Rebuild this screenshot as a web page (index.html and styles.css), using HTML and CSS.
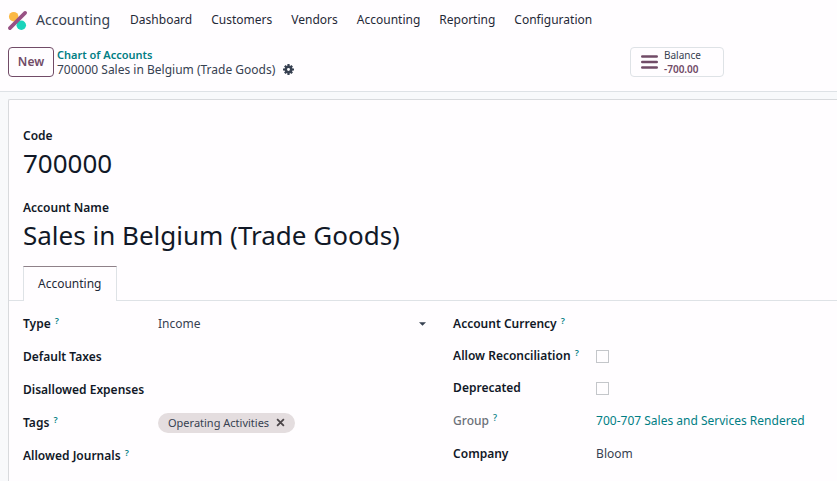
FILE: index.html
```
<!DOCTYPE html>
<html lang="en">
<head>
    <meta charset="UTF-8">
    <meta name="viewport" content="width=device-width, initial-scale=1.0">
    <title>700000 Sales in Belgium (Trade Goods)</title>
    <link rel="stylesheet" href="styles.css">
</head>
<body>
    <header class="navbar">
        <a href="#" class="brand">
            <svg class="logo" viewBox="0 0 20 20" aria-hidden="true">
                <circle cx="6" cy="6" r="5" fill="#fbb945"/>
                <circle cx="14" cy="15" r="5" fill="#1ad3bb"/>
                <path d="M2 18 18 2" stroke="#985184" stroke-width="3.8" stroke-linecap="round"/>
            </svg>
            <span>Accounting</span>
        </a>
        <nav class="menu">
            <a href="#">Dashboard</a>
            <a href="#">Customers</a>
            <a href="#">Vendors</a>
            <a href="#">Accounting</a>
            <a href="#">Reporting</a>
            <a href="#">Configuration</a>
        </nav>
    </header>

    <div class="control-panel">
        <div class="breadcrumbs">
            <button class="btn-new">New</button>
            <div class="crumbs">
                <a href="#" class="crumb-link">Chart of Accounts</a>
                <div class="crumb-current">
                    <span>700000 Sales in Belgium (Trade Goods)</span>
                    <button class="btn-gear" aria-label="Actions">
                        <svg viewBox="0 0 12 12" aria-hidden="true">
                            <path d="M6 0v12M0 6h12M2 2l8 8M10 2l-8 8" stroke="#374151" stroke-width="2.4"/>
                            <circle cx="6" cy="6" r="3" fill="#fff" stroke="#374151" stroke-width="2.8"/>
                        </svg>
                    </button>
                </div>
            </div>
        </div>
        <div class="stats">
            <button class="stat">
                <svg class="bars" viewBox="0 0 17 14" aria-hidden="true">
                    <path d="M1.3 1.5h14.4M1.3 7h14.4M1.3 12.5h14.4" stroke="#714b67" stroke-width="2.6" stroke-linecap="round"/>
                </svg>
                <span class="stat-text">
                    <span>Balance</span>
                    <span class="stat-value">-700.00</span>
                </span>
            </button>
        </div>
    </div>

    <main class="content">
        <form class="sheet">
            <div class="title-field">
                <label for="code">Code</label>
                <input id="code" type="text" value="700000">
            </div>
            <div class="title-field">
                <label for="name">Account Name</label>
                <input id="name" type="text" value="Sales in Belgium (Trade Goods)">
            </div>

            <div class="tabs">
                <button type="button" class="tab">Accounting</button>
            </div>

            <div class="groups">
                <div class="group">
                    <div class="field">
                        <label for="type">Type <sup>?</sup></label>
                        <div class="select">
                            <select id="type">
                                <option>Income</option>
                            </select>
                            <svg class="caret" viewBox="0 0 8 4" aria-hidden="true"><path d="M0 0h8L4 4z" fill="#374151"/></svg>
                        </div>
                    </div>
                    <div class="field">
                        <label for="taxes">Default Taxes</label>
                        <input id="taxes" type="text">
                    </div>
                    <div class="field">
                        <label for="disallowed">Disallowed Expenses</label>
                        <input id="disallowed" type="text">
                    </div>
                    <div class="field">
                        <span class="label">Tags <sup>?</sup></span>
                        <div>
                            <span class="tag">
                                Operating Activities
                                <button type="button" aria-label="Remove tag">
                                    <svg viewBox="0 0 8 8" aria-hidden="true"><path d="M1 1l6 6M7 1L1 7" stroke="#4b4548" stroke-width="1.6"/></svg>
                                </button>
                            </span>
                        </div>
                    </div>
                    <div class="field">
                        <label for="journals">Allowed Journals <sup>?</sup></label>
                        <input id="journals" type="text">
                    </div>
                </div>

                <div class="group">
                    <div class="field">
                        <label for="currency">Account Currency <sup>?</sup></label>
                        <input id="currency" type="text">
                    </div>
                    <div class="field check">
                        <label for="reconcile">Allow Reconciliation <sup>?</sup></label>
                        <input id="reconcile" type="checkbox">
                    </div>
                    <div class="field check">
                        <label for="deprecated">Deprecated</label>
                        <input id="deprecated" type="checkbox">
                    </div>
                    <div class="field">
                        <span class="label readonly">Group <sup>?</sup></span>
                        <a href="#" class="record-link">700-707 Sales and Services Rendered</a>
                    </div>
                    <div class="field">
                        <label for="company">Company</label>
                        <input id="company" type="text" value="Bloom">
                    </div>
                </div>
            </div>
        </form>
    </main>
</body>
</html>
```

FILE: styles.css
```
* {
    box-sizing: border-box;
}
body {
    margin: 0;
    min-height: 100vh;
    display: flex;
    flex-direction: column;
    background-color: #fffdff;
    color: #374151;
    font-family: "Noto Sans", "Open Sans", sans-serif;
    font-size: 12px;
    line-height: 16px;
}
a {
    color: inherit;
    text-decoration: none;
}
button,
input,
select {
    font: inherit;
    color: inherit;
    border: none;
    background: none;
    padding: 0;
    margin: 0;
}
button {
    cursor: pointer;
}
svg {
    display: block;
    fill: none;
}

/* top bar */
.navbar {
    height: 40px;
    padding: 0 8px;
    display: flex;
    align-items: center;
    gap: 20px;
}
.brand {
    display: flex;
    align-items: center;
    gap: 9px;
    font-size: 14px;
}
.logo {
    width: 19px;
    height: 19px;
}
.menu {
    display: flex;
    gap: 19px;
    color: #1f2937;
}

/* breadcrumbs and stat button */
.control-panel {
    min-height: 52px;
    padding: 6px 8px 14px;
    display: grid;
    grid-template-columns: 622fr 199fr;
    border-bottom: 1px solid #dee2e6;
}
.breadcrumbs {
    display: flex;
    align-items: center;
    gap: 3px;
}
.btn-new {
    height: 30px;
    width: 46px;
    border: 1px solid #714b67;
    border-radius: 4px;
    color: #714b67;
    font-weight: 600;
}
.crumbs {
    display: flex;
    flex-direction: column;
    line-height: 15px;
}
.crumb-link {
    color: #017e84;
    font-size: 11px;
    font-weight: 600;
}
.crumb-current {
    display: flex;
    align-items: center;
    gap: 8px;
}
.btn-gear {
    width: 11px;
    height: 11px;
}
.stats {
    display: flex;
    align-items: center;
}
.stat {
    height: 30px;
    min-width: 94px;
    padding: 0 10px;
    display: flex;
    align-items: center;
    gap: 6px;
    border: 1px solid #dee2e6;
    border-radius: 4px;
    text-align: left;
    font-size: 10px;
    line-height: 14px;
}
.bars {
    width: 17px;
    height: 14px;
}
.stat-text {
    display: flex;
    flex-direction: column;
}
.stat-value {
    color: #714b67;
    font-weight: 600;
}

/* form sheet */
.content {
    flex: 1;
    display: flex;
    padding: 7px 0 0 8px;
    background-color: #f8f9fb;
}
.sheet {
    flex: 1;
    min-width: 0;
    padding-top: 28px;
    background-color: #fffdff;
    border: 1px solid #d8dadd;
    border-width: 1px 0 0 1px;
    border-radius: 2px 0 0 0;
}
.title-field {
    display: flex;
    flex-direction: column;
    padding: 0 14px;
    margin-bottom: 18px;
}
.title-field input {
    height: 38px;
    width: 100%;
    font-size: 26px;
    color: #111827;
}
label,
.label {
    color: #111827;
    font-weight: 600;
}
.tabs {
    display: flex;
    padding-left: 14px;
    margin-top: -6px;
    border-bottom: 1px solid #dee2e6;
}
.tab {
    height: 35px;
    padding: 0 14px;
    margin-bottom: -1px;
    background-color: #fffdff;
    border: 1px solid #dee2e6;
    border-top-color: #8f8189;
    border-bottom: none;
    color: #1f2937;
}

.groups {
    display: grid;
    grid-template-columns: 21fr 20fr;
    gap: 27px;
    padding: 10px 0 20px 14px;
}
.group {
    display: flex;
    flex-direction: column;
    gap: 8px;
}
.field {
    min-height: 25px;
    display: grid;
    grid-template-columns: 135px 1fr;
    align-items: center;
}
.group + .group .field {
    grid-template-columns: 143px 1fr;
}
.field.check {
    min-height: 24px;
}
.field input[type="text"] {
    width: 100%;
}
sup {
    margin-left: 1px;
    color: #017e84;
    font-size: 9px;
    line-height: 1;
    vertical-align: 4px;
}
.readonly {
    color: #6b7078;
    font-weight: 500;
}
.select {
    display: grid;
    align-items: center;
}
.select select,
.caret {
    grid-area: 1 / 1;
}
.select select {
    appearance: none;
    width: 100%;
}
.caret {
    width: 7px;
    height: 4px;
    justify-self: end;
    pointer-events: none;
}
.tag {
    display: inline-flex;
    align-items: center;
    gap: 7px;
    height: 20px;
    padding: 0 10px;
    border-radius: 10px;
    background-color: #e4dddf;
    font-size: 11px;
}
.tag button {
    width: 9px;
    height: 9px;
}
input[type="checkbox"] {
    appearance: none;
    width: 13px;
    height: 13px;
    border: 1px solid #c4c6ca;
}
.record-link {
    color: #017e84;
}
```
